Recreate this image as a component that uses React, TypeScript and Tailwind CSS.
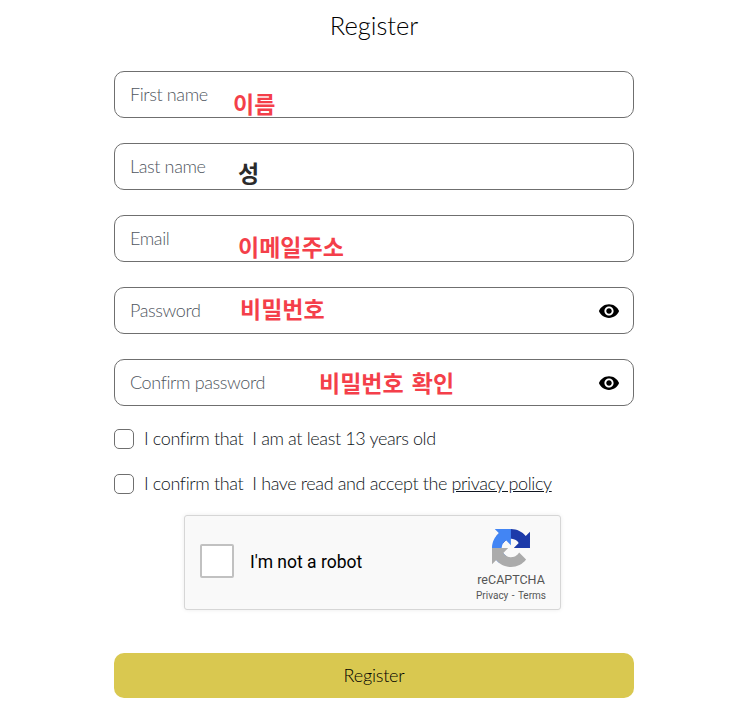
import React from "react";

const sans = "font-['Lato','Noto_Sans',sans-serif]";

function Eye() {
  return (
    <svg viewBox="0 0 24 24" width="22" height="22" className="block" aria-hidden="true">
      <path
        fill="#000"
        d="M12 4.500C7 4.500 2.730 7.610 1 12c1.730 4.390 6 7.500 11 7.500s9.270-3.110 11-7.500c-1.730-4.390-6-7.500-11-7.500zM12 17c-2.760 0-5-2.240-5-5s2.240-5 5-5 5 2.240 5 5-2.240 5-5 5zm0-8c-1.660 0-3 1.340-3 3s1.340 3 3 3 3-1.340 3-3-1.340-3-3-3z"
      />
    </svg>
  );
}

function Field({
  label,
  note,
  noteX,
  noteY,
  dark,
  eye,
}: {
  label: string;
  note: string;
  noteX: string;
  noteY: string;
  dark?: boolean;
  eye?: boolean;
}) {
  return (
    <div className="relative flex h-[47px] w-[520px] items-center justify-between rounded-[10px] border border-[#6f6f6f] bg-white pl-[15px] pr-[13px]">
      <span className="text-[18px] font-light tracking-[-0.38px] text-[#4f5660]">{label}</span>
      {eye && <Eye />}
      <span
        className={`absolute whitespace-nowrap font-['Noto_Sans_CJK_KR',sans-serif] text-[23px] font-bold leading-none [word-spacing:3px] ${noteX} ${noteY} ${
          dark ? "text-[#2b2b2b]" : "text-[#f43f4a]"
        }`}
      >
        {note}
      </span>
    </div>
  );
}

function Check({ children }: { children: React.ReactNode }) {
  return (
    <div className="flex h-[20px] items-center gap-[10px] text-[18px] font-light tracking-[-0.37px] text-[#0f1520]">
      <span className="h-[20px] w-[20px] shrink-0 rounded-[5px] border border-[#6f6f6f] bg-white" />
      <span className="-mt-[2px] whitespace-nowrap">{children}</span>
    </div>
  );
}

function RecaptchaLogo() {
  return (
    <svg viewBox="0 0 64 64" width="38" height="38" className="block" aria-hidden="true">
      <path
        fill="#1c3aa9"
        d="M64 31.955l-.033-1.370V4.687l-7.160 7.160C50.948 4.674 42.033.093 32.050.093c-10.400 0-19.622 4.960-25.458 12.640l11.736 11.860a15.550 15.550 0 0 1 4.754-5.334c2.050-1.600 4.952-2.906 8.968-2.906.485 0 .860.057 1.135.163 4.976.393 9.288 3.140 11.828 7.124l-8.307 8.307 26.283.001"
      />
      <path
        fill="#4285f4"
        d="M31.862.094l-1.370.033H4.594l7.160 7.160C4.580 13.147 0 22.060 0 32.046c0 10.400 4.960 19.622 12.640 25.458l11.860-11.736a15.550 15.550 0 0 1-5.334-4.754c-1.600-2.050-2.906-4.952-2.906-8.968 0-.485.057-.860.163-1.135.393-4.976 3.140-9.288 7.124-11.828l8.307 8.307z"
      />
      <path
        fill="#ababab"
        d="M.001 32.045l.033 1.370v25.898l7.160-7.160c5.860 7.173 14.774 11.754 24.760 11.754 10.400 0 19.622-4.960 25.458-12.640l-11.736-11.860a15.550 15.550 0 0 1-4.754 5.334c-2.050 1.600-4.952 2.906-8.968 2.906-.485 0-.860-.057-1.135-.163-4.976-.393-9.288-3.140-11.828-7.124l8.307-8.307-26.283-.001"
      />
    </svg>
  );
}

export default function App() {
  return (
    <div className={`${sans} relative flex min-h-[719px] w-[743px] flex-col items-center bg-white pl-[5px]`}>
      <h1 className="mt-[9px] text-[25.500px] font-light leading-[32px] text-black">Register</h1>

      <div className="mt-[30px] flex flex-col gap-[25px]">
        <Field label="First name" note="이름" noteX="left-[118px]" noteY="top-[20px]" />
        <Field label="Last name" note="성" noteX="left-[123px]" noteY="top-[17px]" dark />
        <Field label="Email" note="이메일주소" noteX="left-[123px]" noteY="top-[19px]" />
        <Field label="Password" note="비밀번호" noteX="left-[125px]" noteY="top-[9px]" eye />
        <Field label="Confirm password" note="비밀번호 확인" noteX="left-[204px]" noteY="top-[11px]" eye />
      </div>

      <div className="mt-[23px] flex w-[520px] flex-col gap-[25px]">
        <Check>I confirm that&nbsp; I am at least 13 years old</Check>
        <Check>
          I confirm that&nbsp; I have read and accept the <span className="underline">privacy policy</span>
        </Check>
      </div>

      <div className="mt-[21px] mr-[3px] flex h-[95px] w-[377px] items-center justify-between rounded-[3px] border border-[#d6d6d6] bg-[#f9f9f9] pl-[15px] pr-[14px] shadow-[0_0_4px_rgba(0,0,0,0.08)] font-['Roboto',sans-serif]">
        <div className="flex items-center gap-[16px]">
          <span className="mb-[3px] h-[34px] w-[34px] rounded-[2px] border-2 border-[#c1c1c1] bg-white" />
          <span className="pt-[1px] text-[17.500px] leading-none text-black">I'm not a robot</span>
        </div>
        <div className="flex flex-col items-center pt-[5px]">
          <RecaptchaLogo />
          <span className="mt-[5px] text-[12.500px] leading-[16px] text-[#555]">reCAPTCHA</span>
          <span className="mt-[2px] text-[10px] leading-[12px] text-[#555] [word-spacing:1px]">Privacy - Terms</span>
        </div>
      </div>

      <button className="mt-[43px] flex h-[45px] w-[520px] items-center justify-center rounded-[10px] bg-[#d9c850] text-[18px] font-light tracking-[-0.2px] text-black">
        Register
      </button>
    </div>
  );
}
